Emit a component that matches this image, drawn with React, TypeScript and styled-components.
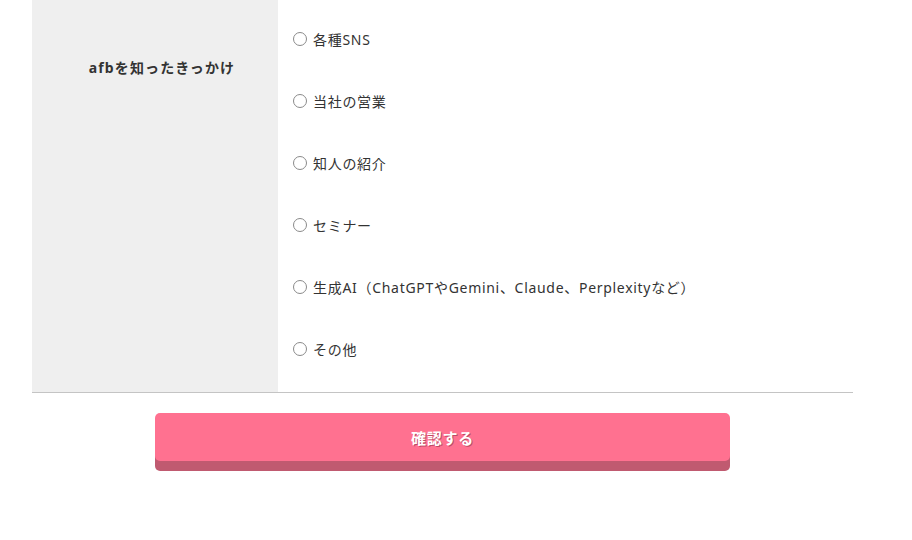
import React from 'react'
import styled, { createGlobalStyle } from 'styled-components'

const GlobalStyle = createGlobalStyle`
	html, body {
		margin: 0;
		padding: 0;
		background: #fff;
	}
	body {
		font-family: 'Noto Sans', 'Noto Sans CJK JP', sans-serif;
		color: #333;
	}
`

const options = [
	'各種SNS',
	'当社の営業',
	'知人の紹介',
	'セミナー',
	'生成AI（ChatGPTやGemini、Claude、Perplexityなど）',
	'その他',
]

const App: React.FC = () => {
	return (
		<>
			<GlobalStyle />
			<Page>
				<FormTable>
					<HeadCell>afbを知ったきっかけ</HeadCell>
					<BodyCell>
						{options.map((opt) => (
							<Option key={opt}>
								<Radio type='radio' name='trigger' value={opt} />
								<span>{opt}</span>
							</Option>
						))}
					</BodyCell>
				</FormTable>
				<Actions>
					<SubmitBtn type='button'>確認する</SubmitBtn>
				</Actions>
			</Page>
		</>
	)
}

const Page = styled.div`
	width: 821px;
	margin-left: 32px;
`
const FormTable = styled.div`
	display: grid;
	grid-template-columns: 246px 1fr;
	border-bottom: 1px solid #c4c4c4;
`
const HeadCell = styled.div`
	background: #efefef;
	padding: 57px 0 0 14px;
	text-align: center;
	font-size: 14px;
	font-weight: 700;
	letter-spacing: 0.08em;
	color: #333;
`
const BodyCell = styled.div`
	display: flex;
	flex-direction: column;
	gap: 42px;
	padding: 29px 15px 33px;
`
const Option = styled.label`
	display: flex;
	align-items: center;
	height: 20px;
	font-size: 14px;
	letter-spacing: 0.05em;
	color: #333;
`
const Radio = styled.input`
	appearance: none;
	box-sizing: border-box;
	width: 14px;
	height: 14px;
	margin: 0 6px 0 0;
	border: 1px solid #8a8a8a;
	border-radius: 50%;
	background: #fff;

	&:checked {
		background: radial-gradient(circle, #555 0 3px, #fff 3.5px);
	}
`
const Actions = styled.div`
	display: flex;
	justify-content: center;
	padding-top: 20px;
`
const SubmitBtn = styled.button`
	width: 575px;
	height: 48px;
	margin-bottom: 10px;
	border: none;
	border-radius: 5px;
	background: #ff7190;
	box-shadow: 0 10px 0 #c05a70;
	color: #fff;
	font-family: inherit;
	font-size: 15px;
	font-weight: 700;
	letter-spacing: 0.05em;
	text-shadow: 1px 1px 0 #c04a66;
	cursor: pointer;
`

export default App
